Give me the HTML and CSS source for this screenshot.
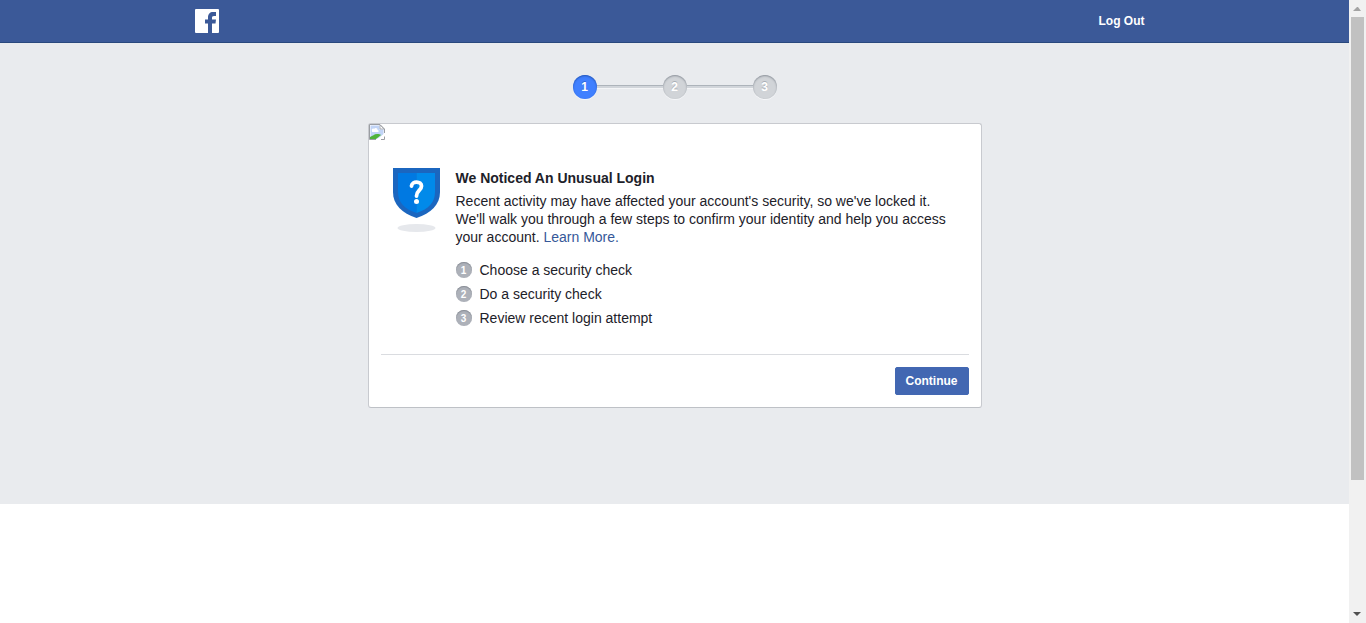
FILE: index.html
```html
<!DOCTYPE html>
<html lang="en">
<head>
<meta charset="utf-8">
<meta name="viewport" content="width=device-width, initial-scale=1">
<title>Security Check</title>
<link rel="stylesheet" href="styles.css">
</head>
<body>
<div class="page">
  <header class="topbar">
    <div class="topbar-inner">
      <a class="logo" href="#" aria-label="Home">
        <svg width="24" height="24" viewBox="0 0 24 24" aria-hidden="true">
          <rect width="24" height="24" rx="1" fill="#fff"/>
          <path d="M13 24v-9.500h-3v-4h3V8.500C13 5 15 3 18 3h3v4h-2c-1.600 0-2 .7-2 2v1.500h4l-.5 4H17V24z" fill="#3b5998"/>
        </svg>
      </a>
      <button class="logout" type="button">Log Out</button>
    </div>
  </header>
  <main class="main">
    <ol class="progress">
      <li class="step step-active">1</li>
      <li class="step">2</li>
      <li class="step">3</li>
    </ol>
    <section class="card">
      <svg class="missing-image" width="16" height="16" viewBox="0 0 16 16" aria-hidden="true">
        <path d="M.5.500H11L15.500 5v10.500H.5z" fill="#fff"/>
        <path d="M1.500 1.500h9v4h4v5l-4 4h-9z" fill="#c1d4f6"/>
        <path d="M3 7c-1-2 1-3 2-2 1-2 4-1 3.500 1C10 6 10 8 9 8H3z" fill="#fff"/>
        <path d="M1 15v-2c3-1 4-3 7-3 2 0 3 0 4 1l-5 4z" fill="#4fb33a"/>
        <path d="M7 16l9-7v3l-5 4z" fill="#fff"/>
        <path d="M.5 15.500V.5H11L15.500 5v4M15.500 12.500v3H12M.5 15.500H7" fill="none" stroke="#9a9da2"/>
        <path d="M11 1v4h4z" fill="#fff" stroke="#9a9da2" stroke-width=".8"/>
      </svg>
      <div class="card-body">
        <svg class="shield" width="48" height="64" viewBox="0 0 48 64" aria-hidden="true">
          <ellipse cx="24.500" cy="60" rx="19" ry="4" fill="#e6e8ec"/>
          <path d="M1 0h47v24c0 13-9 21-23.500 26C10 45 1 37 1 24z" fill="#1b66bf"/>
          <path d="M6 5h18.500v40C12 41 6 34 6 24z" fill="#0079e2"/>
          <path d="M24.500 5H43v19c0 10-6 17-18.500 21z" fill="#018aea"/>
          <path d="M19.500 18c.5-5.500 10-5 10 0 0 4.500-5 4.500-5 10" fill="none" stroke="#fff" stroke-width="3.800" stroke-linecap="round"/>
          <circle cx="24.500" cy="33.600" r="2.500" fill="#fff"/>
        </svg>
        <div class="copy">
          <h1 class="title">We Noticed An Unusual Login</h1>
          <p class="text">Recent activity may have affected your account's security, so we've locked it. We'll walk you through a few steps to confirm your identity and help you access your account. <a class="link" href="#">Learn More.</a></p>
          <ol class="tasks">
            <li class="task"><span class="number">1</span>Choose a security check</li>
            <li class="task"><span class="number">2</span>Do a security check</li>
            <li class="task"><span class="number">3</span>Review recent login attempt</li>
          </ol>
        </div>
      </div>
      <footer class="card-footer">
        <button class="continue" type="button">Continue</button>
      </footer>
    </section>
  </main>
</div>
<div class="scrollbar" aria-hidden="true">
  <svg class="arrow" width="15" height="17" viewBox="0 0 15 17"><path d="M3 11l4-4h1l3 4z" fill="#a3a3a3"/></svg>
  <div class="track"><div class="thumb"></div></div>
  <svg class="arrow" width="15" height="17" viewBox="0 0 15 17"><path d="M3 6h8l-4 4z" fill="#505050"/></svg>
</div>
</body>
</html>
```

FILE: styles.css
```css
*,
*::before {
  box-sizing: border-box;
}

body {
  margin: 0;
  min-height: 100vh;
  display: grid;
  grid-template-columns: 1fr 17px;
  background: #fff;
  color: #1d2129;
  font-family: "Liberation Sans", Arial, sans-serif;
  font-size: 14px;
  line-height: 18px;
}

ol {
  list-style: none;
  margin: 0;
  padding: 0;
}

.topbar {
  background: #3b5998;
  border-bottom: 1px solid #29487d;
}

.topbar-inner {
  display: flex;
  align-items: center;
  justify-content: space-between;
  max-width: 980px;
  height: 42px;
  margin: 0 auto;
  padding: 0 20px 0 10px;
}

.logo {
  display: flex;
}

.logout {
  padding: 0;
  border: 0;
  background: none;
  color: #fff;
  font: bold 12px/18px "Liberation Sans", Arial, sans-serif;
}

.main {
  padding: 32px 20px 96px;
  background: #e9ebee;
}

.progress {
  display: flex;
  justify-content: center;
}

.step {
  display: flex;
  align-items: center;
  justify-content: center;
  width: 24px;
  height: 24px;
  border-radius: 50%;
  background: #d1d4d8;
  box-shadow: inset 0 1px 2px #8b9199, 0 1px 0 #f6f7f9;
  color: #fff;
  font-size: 12px;
  font-weight: bold;
  text-shadow: 0 -1px 0 #a9afb6;
}

.step-active {
  background: #4080ff;
  box-shadow: inset 0 1px 2px #2455b5, 0 1px 0 #f6f7f9;
  text-shadow: 0 -1px 0 #2f67d8;
}

.step + .step {
  margin-left: 66px;
  position: relative;
}

.step + .step::before {
  content: "";
  position: absolute;
  right: 100%;
  top: 10px;
  width: 66px;
  height: 4px;
  border-top: 1px solid #adb3ba;
  border-bottom: 1px solid #f4f5f7;
  background: #d1d5da;
}

.card {
  max-width: 614px;
  margin: 24px auto 0;
  border: 1px solid #c8cacf;
  border-bottom-color: #bec1c6;
  border-radius: 3px;
  background: #fff;
}

.missing-image {
  display: block;
}

.card-body {
  display: flex;
  gap: 16px;
  padding: 28px 24px 24px 23px;
}

.shield {
  flex: none;
}

.copy {
  padding-top: 1px;
}

.title {
  margin: 0 0 5px;
  font-size: 14px;
  line-height: 18px;
}

.text {
  margin: 0 0 12px;
}

.link {
  color: #365899;
  text-decoration: none;
}

.task {
  display: flex;
  align-items: center;
  gap: 8px;
  height: 24px;
}

.number {
  display: flex;
  align-items: center;
  justify-content: center;
  width: 16px;
  height: 16px;
  padding-top: 2px;
  border-radius: 50%;
  background: #adb1b9;
  box-shadow: inset 0 1px 1px #888d95;
  color: #fff;
  font-size: 10px;
  font-weight: bold;
}

.card-footer {
  display: flex;
  justify-content: flex-end;
  margin: 0 12px;
  padding: 12px 0;
  border-top: 1px solid #dadce0;
}

.continue {
  height: 28px;
  padding: 0 10px;
  border: 1px solid #4267b2;
  border-radius: 2px;
  background: #4267b2;
  color: #fff;
  font: bold 12px/26px "Liberation Sans", Arial, sans-serif;
}

.scrollbar {
  display: flex;
  flex-direction: column;
  padding: 0 1px;
  background: #f1f1f1;
}

.track {
  flex: 1;
  padding: 0 1px;
}

.thumb {
  height: 78.6%;
  background: #c1c1c1;
}
```
